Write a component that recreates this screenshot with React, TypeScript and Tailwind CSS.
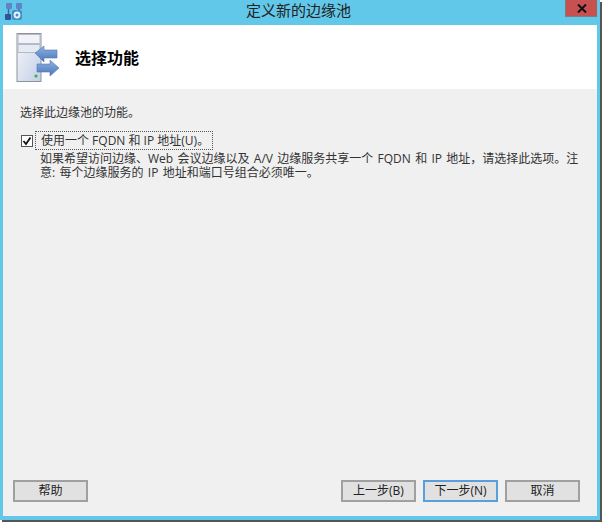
const FONT = "font-['Open_Sans','Noto_Sans_CJK_SC',sans-serif]";

function AppIcon() {
  return (
    <svg width="18" height="18" viewBox="0 0 18 18">
      <rect x="1" y="0" width="6" height="6" rx="1" fill="#5f86c4" />
      <rect x="11" y="0" width="6" height="6" rx="1" fill="#5f86c4" />
      <rect x="0" y="11" width="6" height="6" rx="1" fill="#2f5597" />
      <path d="M3.5 6v5M14 6v2" stroke="#3d669f" strokeWidth="1.5" fill="none" />
      <rect x="7" y="7" width="10" height="10" rx="2" fill="#3f8fc9" />
      <circle cx="12" cy="12" r="3.4" fill="#e8f4fb" />
      <circle cx="12" cy="12" r="1.5" fill="#3f8fc9" />
    </svg>
  );
}

function ServerIcon() {
  return (
    <svg width="44" height="50" viewBox="0 0 44 50">
      <defs>
        <linearGradient id="body" x1="0" y1="0" x2="1" y2="1">
          <stop offset="0" stopColor="#f6f8fc" />
          <stop offset="1" stopColor="#c3cfe6" />
        </linearGradient>
        <linearGradient id="arrow" x1="0" y1="0" x2="0" y2="1">
          <stop offset="0" stopColor="#8fb2e2" />
          <stop offset="1" stopColor="#4a76b8" />
        </linearGradient>
      </defs>
      <rect x="1" y="0.5" width="24" height="48" fill="url(#body)" stroke="#8e939c" />
      <rect x="2" y="1.5" width="22" height="9" fill="#f1f3f8" stroke="#b4bac6" />
      <rect x="2" y="11.5" width="22" height="8" fill="#e6eaf3" stroke="#b4bac6" />
      <circle cx="20" cy="43" r="1.6" fill="#2fb34a" />
      <path d="M19 20 L28 13 V17 H41 V25 H28 V29 Z" fill="url(#arrow)" stroke="#4f79b6" strokeWidth="0.6" />
      <path d="M43 35 L34 27 V31 H21 V39 H34 V43 Z" fill="url(#arrow)" stroke="#4f79b6" strokeWidth="0.6" />
    </svg>
  );
}

function DialogButton({ label, focused }: { label: string; focused?: boolean }) {
  return (
    <button
      className={
        "w-[75px] h-[22px] bg-[#e1e1e1] border-2 text-[12px] text-[#222] flex items-center justify-center " +
        (focused ? "border-[#5a9fdc]" : "border-[#a0a0a0]")
      }
    >
      {label}
    </button>
  );
}

export default function App() {
  return (
    <div className={"w-[604px] h-[524px] bg-white " + FONT}>
      <div className="w-[600px] h-[520px] bg-[#62c8ea] flex flex-col shadow-[2px_2px_0_#555] px-[3px] pb-[4px]">
        {/* Title bar */}
        <div className="h-[25px] flex items-center relative shrink-0">
          <div className="ml-[2px] mb-[2px]">
            <AppIcon />
          </div>
          <div className="absolute left-[-3px] right-0 top-0 text-center text-[15px] leading-[20px] text-[#222]">
            定义新的边缘池
          </div>
          <div className="absolute right-0 top-0 w-[32px] h-[17px] bg-[#c75050] border-l border-b border-[#7d7d7d] flex items-center justify-center">
            <svg width="10" height="9" viewBox="0 0 10 9">
              <path d="M1 0.5 L9 8.5 M9 0.5 L1 8.5" stroke="#111" strokeWidth="2" />
            </svg>
          </div>
        </div>

        {/* Header */}
        <div className="h-[64px] bg-white flex items-center shrink-0 pl-[13px]">
          <div className="mt-[1px]">
            <ServerIcon />
          </div>
          <div className="ml-[15px] mt-[2px] text-[16px] font-bold text-black">选择功能</div>
        </div>

        {/* Body */}
        <div className="flex-1 bg-[#f0f0f0] flex flex-col text-[12px] leading-[14px] text-[#333]">
          <div className="pl-[17px] pt-[17px]">选择此边缘池的功能。</div>
          <div className="flex items-center pl-[18px] mt-[11px]">
            <div className="w-[12px] h-[12px] bg-white border border-[#555] flex items-center justify-center">
              <svg width="10" height="10" viewBox="0 0 10 10">
                <path d="M1.5 5 L4 8 L8.5 1.5" stroke="#111" strokeWidth="1.8" fill="none" />
              </svg>
            </div>
            <div className="ml-[2px] h-[19px] w-[178px] border border-dotted border-[#555] flex items-center pl-[5px]">
              使用一个 FQDN 和 IP 地址(U)。
            </div>
          </div>
          <div className="pl-[37px] mt-[2px] w-[582px] [word-spacing:1.2px]">
            如果希望访问边缘、Web 会议边缘以及 A/V 边缘服务共享一个 FQDN 和 IP 地址，请选择此选项。注意: 每个边缘服务的 IP 地址和端口号组合必须唯一。
          </div>

          {/* Buttons */}
          <div className="mt-auto flex pl-[10px] pr-[17px] pb-[14px]">
            <DialogButton label="帮助" />
            <div className="ml-auto flex gap-[7px]">
              <DialogButton label="上一步(B)" />
              <DialogButton label="下一步(N)" focused />
              <DialogButton label="取消" />
            </div>
          </div>
        </div>
      </div>
    </div>
  );
}
